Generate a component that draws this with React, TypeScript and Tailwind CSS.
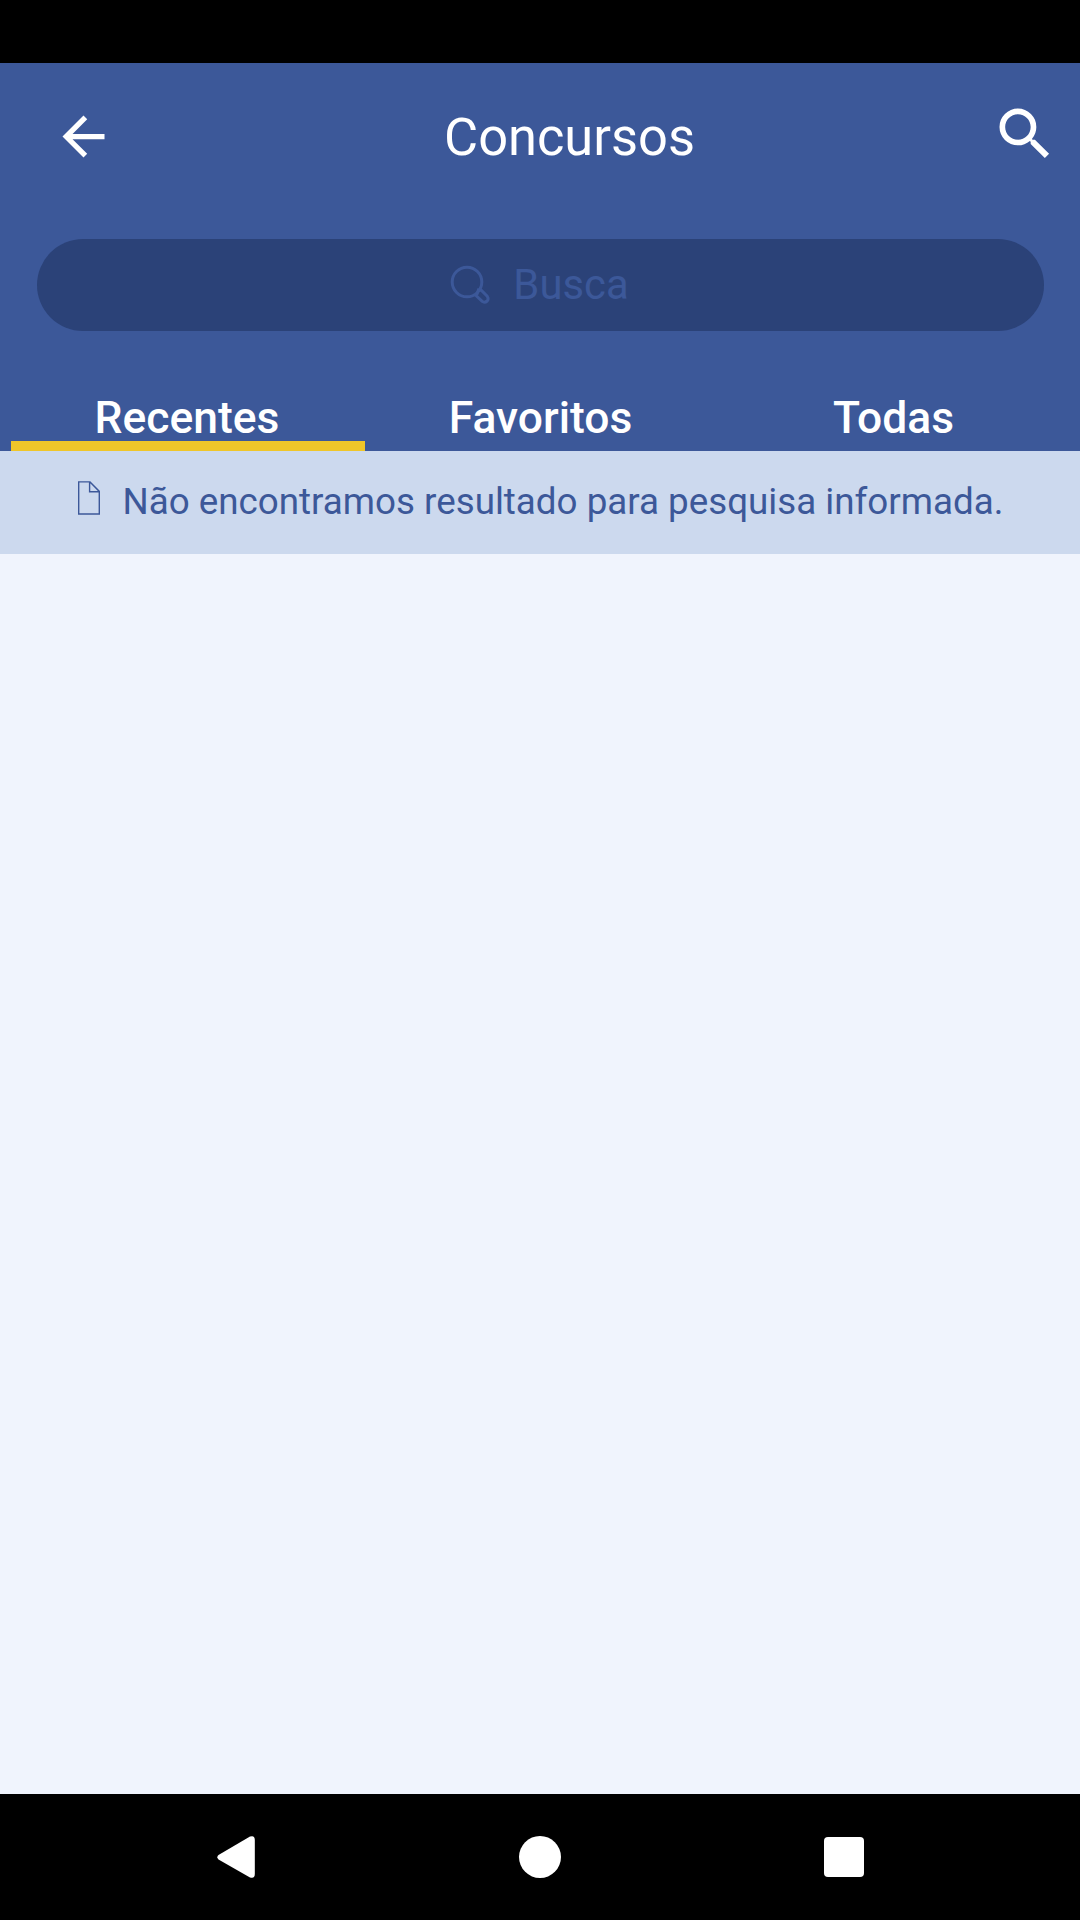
const tabs = ['Recentes', 'Favoritos', 'Todas'];

function BackArrow() {
  return (
    <svg className="h-[63px] w-[63px]" viewBox="0 0 24 24" fill="currentColor">
      <path d="M20 11H7.83l5.59-5.59L12 4l-8 8 8 8 1.41-1.41L7.83 13H20v-2z" />
    </svg>
  );
}

function SearchIcon() {
  return (
    <svg className="h-[68px] w-[68px]" viewBox="0 0 24 24" fill="currentColor">
      <path d="M15.5 14h-.79l-.28-.27A6.471 6.471 0 0 0 16 9.5 6.5 6.5 0 1 0 9.5 16c1.61 0 3.09-.59 4.23-1.57l.27.28v.79l5 4.99L20.49 19l-4.99-5zm-6 0C7.01 14 5 11.99 5 9.5S7.01 5 9.5 5 14 7.01 14 9.5 11.99 14 9.5 14z" />
    </svg>
  );
}

function MagnifierOutline() {
  return (
    <svg className="h-10 w-10" viewBox="0 0 40 40" fill="none" stroke="currentColor" strokeWidth="3">
      <circle cx="17" cy="17" r="14.8" />
      <path d="M27.2 28.6 L28.4 24.8 L31.2 25.2 L37.2 31.2 Q39 34 37.2 36 Q34.6 38.2 32.2 36.4 L26 30.6 Z" />
    </svg>
  );
}

function PageOutline() {
  return (
    <svg className="h-[34px] w-[22px]" viewBox="0 0 22 34" fill="none" stroke="currentColor" strokeWidth="1.4">
      <path d="M0.7 0.9 H12 L21.3 10.4 V33 H0.7 Z M11.6 0.9 V10.7 H21.3" />
    </svg>
  );
}

export default function App() {
  return (
    <div className="flex h-[1920px] w-[1080px] flex-col overflow-hidden bg-[#f0f4fd] font-[Roboto,sans-serif]">
      <div className="h-[63px] bg-black" />
      <header className="flex h-[388px] flex-col bg-[#3c5899] text-white">
        <div className="flex h-[147px] items-center justify-between pr-[21px] pl-[52px]">
          <BackArrow />
          <h1 className="ml-[33px] pt-[2px] text-[52.4px] leading-none">Concursos</h1>
          <div className="mb-[6px]">
            <SearchIcon />
          </div>
        </div>
        <div className="mt-[29px] mr-9 ml-[37px] flex h-[92px] items-center justify-center gap-[23px] rounded-full bg-[#2b4278] pr-[2px] text-[#3c5899]">
          <MagnifierOutline />
          <span className="text-[41.8px] leading-none">Busca</span>
        </div>
        <nav className="mr-[9px] ml-[11px] mt-auto grid grid-cols-[354px_353px_353px]">
          {tabs.map((tab, i) => (
            <div
              key={tab}
              className={
                i === 0
                  ? 'h-[56px] border-b-[10px] border-[#efc629] pr-[2px] text-center text-[44.4px] leading-[46px] font-medium'
                  : 'h-[56px] pr-[2px] text-center text-[44.4px] leading-[46px] font-medium'
              }
            >
              {tab}
            </div>
          ))}
        </nav>
      </header>
      <div className="flex h-[103px] items-center gap-[22.5px] bg-[#ccd9ee] pl-[78px] text-[#3c5899]">
        <div className="mb-[9px]">
          <PageOutline />
        </div>
        <p className="text-[36.75px] leading-none whitespace-nowrap">
          Não encontramos resultado para pesquisa informada.
        </p>
      </div>
      <main className="flex-1" />
      <footer className="flex h-[126px] items-center bg-black pl-[217px] text-white">
        <svg className="h-[42px] w-[38px]" viewBox="0 0 38 42" fill="currentColor">
          <path d="M1.5 19 L33 0.6 Q37.8 -1 37.8 4 V38 Q37.8 43 33 41.4 L1.5 23.4 Q-0.8 21.2 1.5 19 Z" />
        </svg>
        <div className="ml-[264px] h-[42px] w-[42px] rounded-full bg-white" />
        <div className="ml-[263px] h-10 w-10 rounded-[4px] bg-white" />
      </footer>
    </div>
  );
}
